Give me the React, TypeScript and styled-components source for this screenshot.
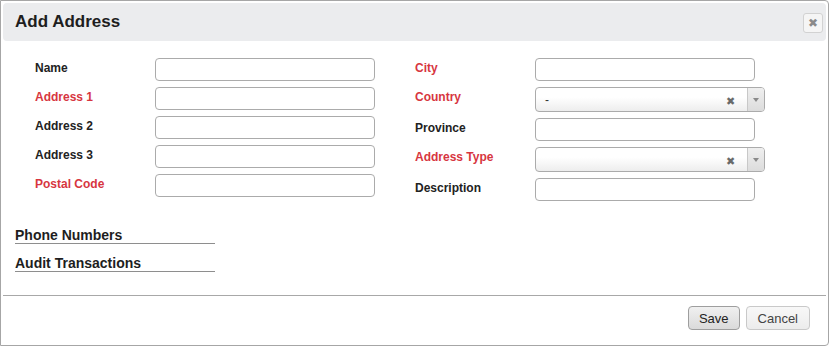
import styled, { createGlobalStyle } from "styled-components";

const Global = createGlobalStyle`
  html, body {
    margin: 0;
    padding: 0;
    background: #fff;
    font-family: "Liberation Sans", Arial, sans-serif;
  }
`

const Dialog = styled.div`
  box-sizing: border-box;
  width: 829px;
  height: 346px;
  border: 1px solid #a6a6a6;
  border-radius: 0 4px 4px 0;
  padding: 2px;
  display: flex;
  flex-flow: column;
  background: #fff;
`
const Header = styled.div`
  height: 38px;
  background: #ebecee;
  border-radius: 4px;
  display: flex;
  align-items: center;
  justify-content: space-between;
  padding: 0 3px 0 12px;
`
const Title = styled.h1`
  margin: 0;
  font-size: 17px;
  font-weight: 700;
  color: #1e1e1e;
`
const CloseButton = styled.button`
  box-sizing: border-box;
  width: 20px;
  height: 20px;
  padding: 0;
  margin-top: 2px;
  border: 1px solid #d2d2d2;
  border-radius: 3px;
  background: #f5f5f5;
  color: #8a8a8a;
  font-size: 12px;
  line-height: 18px;
  font-family: "DejaVu Sans", sans-serif;
`
const Body = styled.div`
  flex: 1;
  padding: 17px 0 0 12px;
`
const Form = styled.div`
  display: flex;
  gap: 40px;
  padding-left: 20px;
`
const Column = styled.div`
  display: flex;
  flex-flow: column;
  gap: 6px;
`
const Row = styled.div`
  display: flex;
  align-items: flex-start;
`
const Label = styled.label<{ $required?: boolean }>`
  width: 120px;
  padding-top: 3px;
  font-size: 12px;
  font-weight: 700;
  color: ${({ $required }) => ($required ? "#d7363f" : "#222")};
`
const Input = styled.input`
  box-sizing: border-box;
  width: 220px;
  height: 23px;
  margin: 0;
  border: 1px solid #ababab;
  border-radius: 4px;
  background: #fff;
  font: 12px "Liberation Sans", Arial, sans-serif;
`
const Select = styled.div`
  box-sizing: border-box;
  width: 230px;
  height: 25px;
  border: 1px solid #ababab;
  border-radius: 4px;
  background: linear-gradient(#fff 40%, #ededed);
  display: flex;
  align-items: center;
  overflow: hidden;
`
const SelectValue = styled.span`
  flex: 1;
  padding-left: 9px;
  font-size: 12px;
  color: #333;
`
const Clear = styled.span`
  width: 14px;
  margin-right: 7px;
  margin-top: 4px;
  font-size: 11px;
  font-weight: 700;
  color: #6a6a6a;
  font-family: "DejaVu Sans", sans-serif;
`
const Arrow = styled.span`
  width: 16px;
  align-self: stretch;
  border-left: 1px solid #c8c8c8;
  background: linear-gradient(#efefef, #dcdcdc);
  display: flex;
  align-items: center;
  justify-content: center;

  &::after {
    content: "";
    border-left: 3px solid transparent;
    border-right: 3px solid transparent;
    border-top: 4px solid #8a8a8a;
  }
`
const Sections = styled.div`
  margin-top: 26px;
  width: 200px;
  display: flex;
  flex-flow: column;
  gap: 11px;
`
const Section = styled.h2`
  margin: 0;
  font-size: 14px;
  line-height: 16px;
  font-weight: 700;
  color: #1e1e1e;
  border-bottom: 1px solid #8e8e8e;
`
const Footer = styled.div`
  border-top: 1px solid #a8a8a8;
  height: 48px;
  box-sizing: border-box;
  display: flex;
  justify-content: flex-end;
  align-items: flex-start;
  gap: 6px;
  padding: 10px 16px 0 0;
`
const Button = styled.button<{ $primary?: boolean }>`
  box-sizing: border-box;
  height: 24px;
  padding: 0 ${({ $primary }) => ($primary ? "10px" : "11px")};
  border: 1px solid ${({ $primary }) => ($primary ? "#9e9e9e" : "#c9c9c9")};
  border-radius: 4px;
  background: ${({ $primary }) =>
    $primary ? "linear-gradient(#f0f0f0, #dadada)" : "linear-gradient(#f8f8f8, #ececec)"};
  color: ${({ $primary }) => ($primary ? "#222" : "#444")};
  font: 13px "Liberation Sans", Arial, sans-serif;
`

type Field = { label: string; required?: boolean; select?: string }

const left: Field[] = [
  { label: "Name" },
  { label: "Address 1", required: true },
  { label: "Address 2" },
  { label: "Address 3" },
  { label: "Postal Code", required: true },
]

const right: Field[] = [
  { label: "City", required: true },
  { label: "Country", required: true, select: "-" },
  { label: "Province" },
  { label: "Address Type", required: true, select: "" },
  { label: "Description" },
]

function FieldRow({ field }: { field: Field }) {
  return (
    <Row>
      <Label $required={field.required}>{field.label}</Label>
      {field.select !== undefined ? (
        <Select>
          <SelectValue>{field.select}</SelectValue>
          <Clear>✖</Clear>
          <Arrow />
        </Select>
      ) : (
        <Input type="text" />
      )}
    </Row>
  )
}

export default function App() {
  return (
    <>
      <Global />
      <Dialog>
        <Header>
          <Title>Add Address</Title>
          <CloseButton>✖</CloseButton>
        </Header>
        <Body>
          <Form>
            <Column>
              {left.map((f) => <FieldRow key={f.label} field={f} />)}
            </Column>
            <Column>
              {right.map((f) => <FieldRow key={f.label} field={f} />)}
            </Column>
          </Form>
          <Sections>
            <Section>Phone Numbers</Section>
            <Section>Audit Transactions</Section>
          </Sections>
        </Body>
        <Footer>
          <Button $primary>Save</Button>
          <Button>Cancel</Button>
        </Footer>
      </Dialog>
    </>
  )
}
